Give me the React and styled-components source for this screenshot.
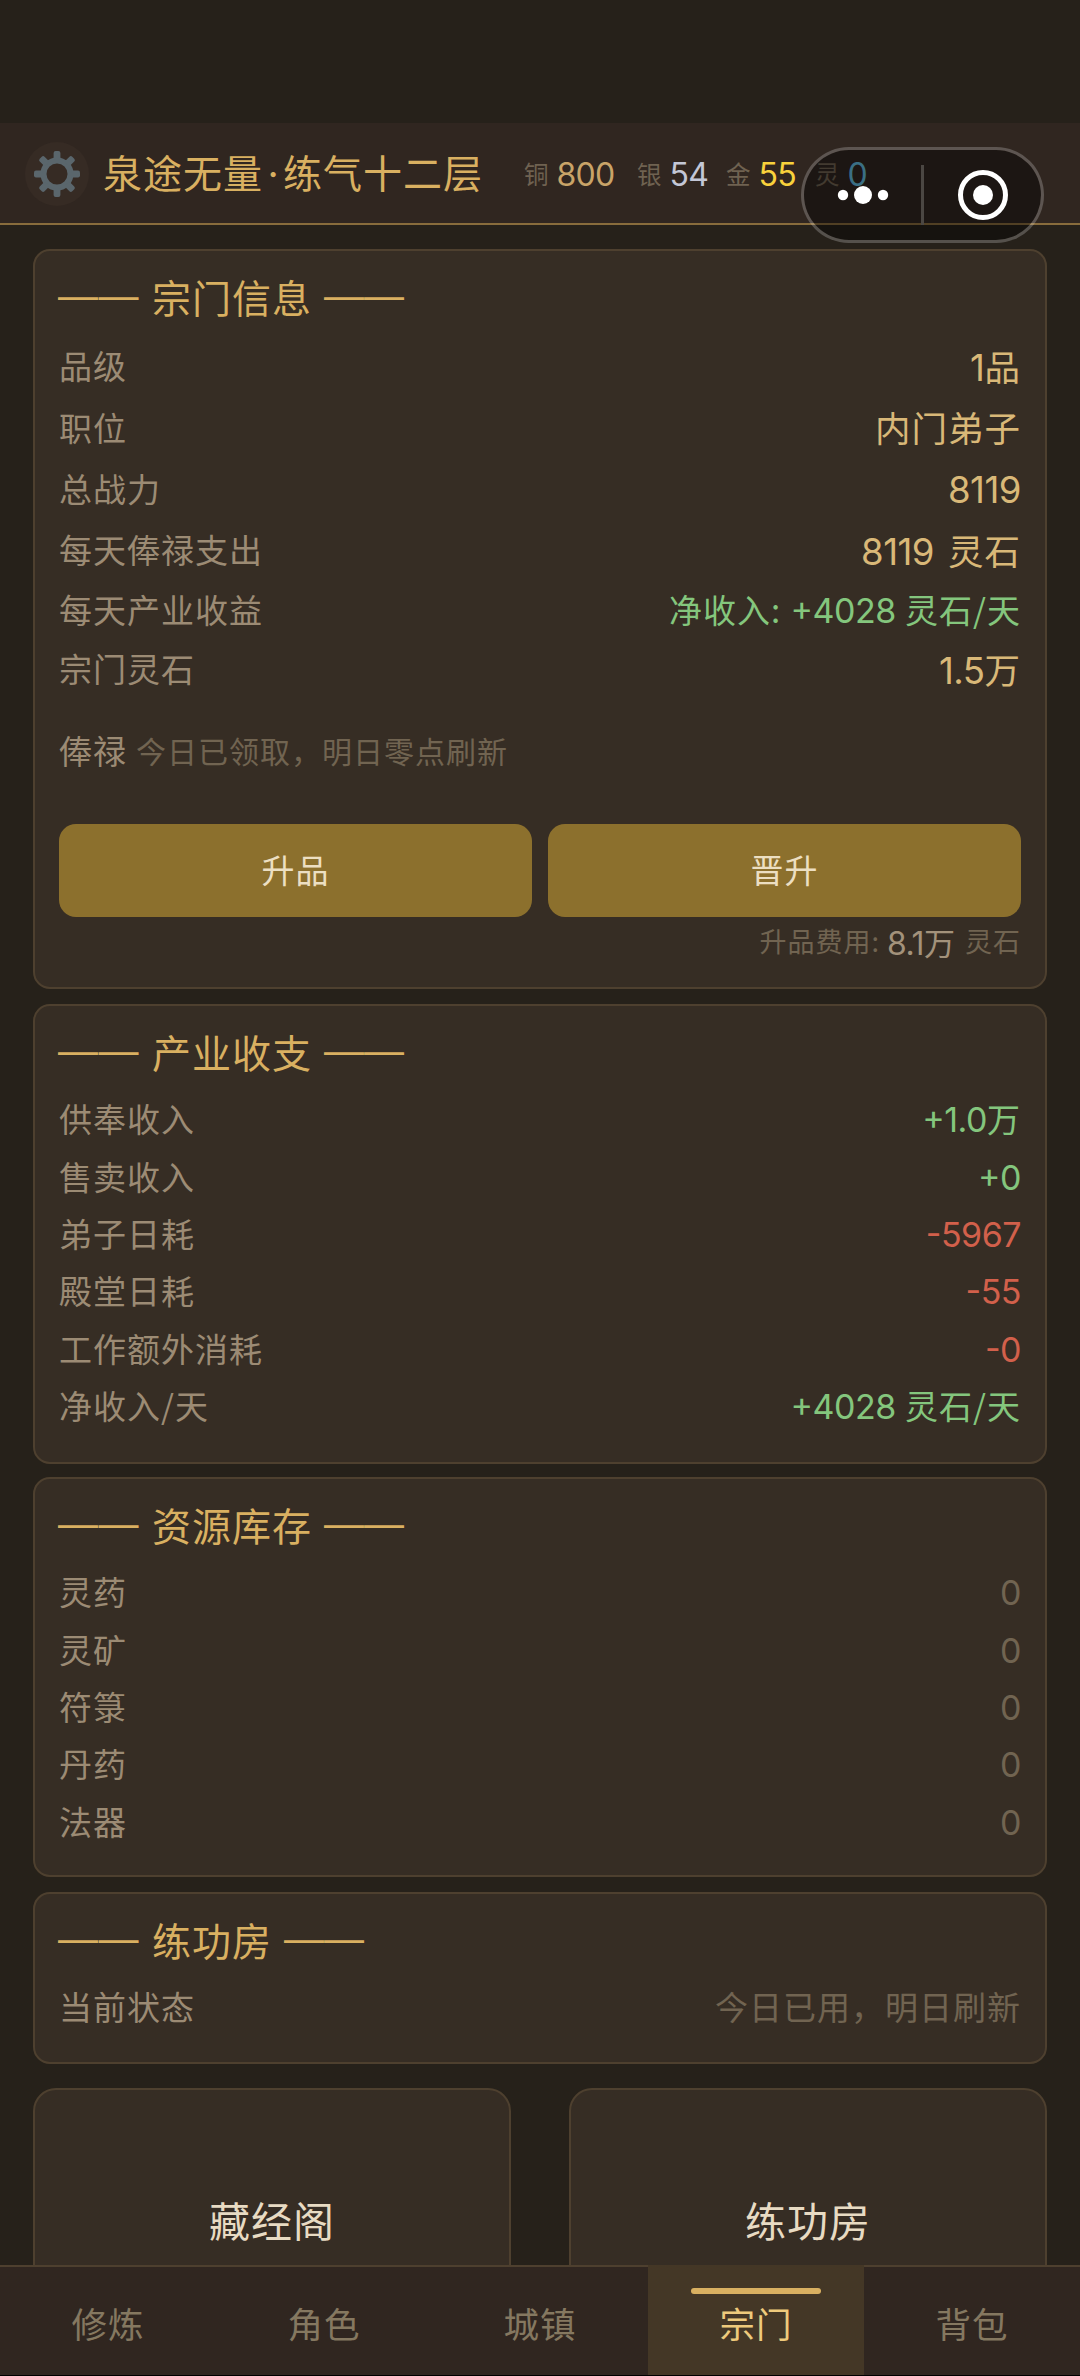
import React from 'react';
import styled, { createGlobalStyle } from 'styled-components';

const Global = createGlobalStyle`
  * { box-sizing: border-box; }
  body {
    margin: 0;
    background: #26211a;
    font-family: "Noto Sans CJK SC", sans-serif;
    letter-spacing: 1px;
  }
`;

const Screen = styled.div`
  height: 2376px;
  display: flex;
  flex-direction: column;
  overflow: hidden;
  background: #26211a;
  border-bottom: 1px solid #000;
`;

const StatusSpace = styled.div`
  flex: none;
  height: 123px;
`;

const Header = styled.header`
  position: relative;
  flex: none;
  height: 102px;
  display: flex;
  align-items: center;
  padding: 1px 0 0 25px;
  background: #302620;
  border-bottom: 2px solid #886c3c;
`;

const GearButton = styled.div`
  width: 64px;
  height: 64px;
  border-radius: 50%;
  display: grid;
  place-items: center;
  background: #362b24;
`;

const Player = styled.div`
  width: 421px;
  margin: -2px 0 0 14px;
  font-size: 39px;
  line-height: 60px;
  color: #d9b061;
  white-space: nowrap;
`;

const MidDot = styled.span`
  display: inline-block;
  width: 20px;
  text-align: center;
  letter-spacing: 0;
  font-family: Inter, sans-serif;
`;

const Purse = styled.div`
  display: flex;
  align-items: center;
`;

const Coin = styled.div`
  width: ${(p) => p.$w}px;
  display: flex;
  align-items: center;
  font-size: 24.5px;
  line-height: 36px;
  color: #6f6251;
`;

const CoinCount = styled.span`
  margin: 3px 0 0 7px;
  font-family: Inter, sans-serif;
  font-size: 32px;
  letter-spacing: -0.7px;
  color: ${(p) => p.$color};
`;

const Capsule = styled.div`
  position: absolute;
  left: 801px;
  top: 24px;
  z-index: 2;
  width: 243px;
  height: 96px;
  border: 3px solid rgba(255, 255, 255, 0.22);
  border-radius: 48px;
  background: rgba(0, 0, 0, 0.4);
  background-clip: padding-box;
  display: grid;
  grid-template-columns: 1fr 3px 1fr;
  align-items: center;
  justify-items: center;
`;

const CapsuleRule = styled.i`
  width: 3px;
  height: 60px;
  background: #4b4743;
`;

const Content = styled.main`
  flex: 1;
  min-height: 0;
  overflow: hidden;
  padding: 24px 33px 0;
`;

const Card = styled.section`
  height: ${(p) => p.$h}px;
  margin-bottom: ${(p) => p.$gap || 15}px;
  padding: 16px 24px 0;
  border: 2px solid #4e402f;
  border-radius: 17px;
  background: #362d24;
`;

const CardTitle = styled.h2`
  display: flex;
  margin: 0 0 8px -1px;
  font-size: 39px;
  font-weight: 400;
  line-height: 59px;
  color: #d9b061;
`;

const Dash = styled.span`
  font-family: "Liberation Sans", sans-serif;
  font-size: 40px;
  line-height: 57px;
  letter-spacing: ${(p) => (p.$split ? 0.5 : 0)}px;
`;

const TitleText = styled.span`
  margin: 0 12px 0 13px;
`;

const Row = styled.div`
  display: flex;
  align-items: center;
  justify-content: space-between;
  height: ${(p) => (p.$large ? 61.4 : 57.4)}px;
  padding-top: 1px;
  font-size: 33px;
  color: #9c8b74;
`;

const tones = {
  gold: '#d9b878',
  green: '#84c67d',
  red: '#d2604b',
  muted: '#716451',
};

const Value = styled.span`
  font-size: ${(p) => (p.$large ? 35.5 : 33)}px;
  word-spacing: ${(p) => (p.$large ? 5 : 1)}px;
  color: ${(p) => tones[p.$tone]};
`;

const Num = styled.span`
  font-family: Inter, sans-serif;
  font-size: 1.03em;
  font-feature-settings: "case" 1;
  letter-spacing: -0.5px;
`;

const Stipend = styled.div`
  display: flex;
  align-items: center;
  gap: 9px;
  height: 62px;
  margin-top: 21px;
  font-size: 33px;
  color: #9c8b74;
`;

const StipendNote = styled.span`
  font-size: 30px;
  color: #716451;
`;

const Actions = styled.div`
  display: grid;
  grid-template-columns: 1fr 1fr;
  gap: 16px;
  margin-top: 43px;
`;

const ActionButton = styled.button`
  height: 93px;
  padding: 0 0 3px;
  border: 0;
  border-radius: 17px;
  background: #8c702d;
  color: #ecdfc2;
  font: inherit;
  font-size: 33px;
  letter-spacing: 1px;
`;

const Fee = styled.div`
  display: flex;
  justify-content: flex-end;
  align-items: center;
  height: 46px;
  font-size: 27px;
  color: #716451;
`;

const FeeAmount = styled.span`
  margin: 2px 9px 0 7px;
  font-size: 31px;
  color: #a3927b;
`;

const Halls = styled.div`
  display: grid;
  grid-template-columns: 1fr 1fr;
  gap: 58px;
  margin-top: 24px;
`;

const Hall = styled.div`
  height: 268px;
  padding-bottom: 6px;
  border: 2px solid #4e402f;
  border-radius: 23px;
  background: #362d24;
  display: grid;
  place-items: center;
  font-size: 41px;
  color: #e8dbc3;
`;

const TabBar = styled.nav`
  flex: none;
  height: 110px;
  display: grid;
  grid-template-columns: repeat(5, 1fr);
  background: #302620;
  border-top: 2px solid #4e402f;
`;

const Tab = styled.div`
  position: relative;
  margin-top: -2px;
  padding-top: 4px;
  display: grid;
  place-items: center;
  font-size: 35.5px;
  color: ${(p) => (p.$active ? '#eeca7c' : '#857860')};
  background: ${(p) => (p.$active ? '#443726' : 'transparent')};
`;

const TabMark = styled.i`
  position: absolute;
  top: 23px;
  left: 20%;
  width: 60%;
  height: 6px;
  border-radius: 3px;
  background: #d9b061;
`;

const Gear = () => (
  <svg width="46" height="46" viewBox="-23 -23 46 46">
    <circle r="13.5" fill="none" stroke="#5a666c" strokeWidth="6" />
    {[0, 45, 90, 135, 180, 225, 270, 315].map((a) => (
      <rect key={a} x="-3.4" y="-23" width="6.8" height="9" rx="2" fill="#5a666c" transform={`rotate(${a})`} />
    ))}
  </svg>
);

const MoreDots = () => (
  <svg width="54" height="24" viewBox="-27 -12 54 24" fill="#fff">
    <circle cx="-20" r="5.2" />
    <circle r="9" />
    <circle cx="20" r="5.2" />
  </svg>
);

const Target = () => (
  <svg width="52" height="52" viewBox="-26 -26 52 52" fill="#fff">
    <circle r="22.5" fill="none" stroke="#fff" strokeWidth="5" />
    <circle r="10" />
  </svg>
);

const Rich = ({ text }) =>
  text.split(/([+\-\d.]+)/).map((s, i) => (i % 2 ? <Num key={i}>{s}</Num> : s));

const Title = ({ children }) => (
  <CardTitle>
    <Dash $split>——</Dash>
    <TitleText>{children}</TitleText>
    <Dash>——</Dash>
  </CardTitle>
);

const Entry = ({ label, value, tone = 'muted', large }) => (
  <Row $large={large}>
    <span>{label}</span>
    <Value $tone={tone} $large={large}>
      <Rich text={value} />
    </Value>
  </Row>
);

const coins = [
  ['铜', '800', '#c9a468', 113],
  ['银', '54', '#c3c7d6', 89],
  ['金', '55', '#f8d13c', 89],
  ['灵', '0', '#62b9dc', 60],
];

const budget = [
  ['供奉收入', '+1.0万', 'green'],
  ['售卖收入', '+0', 'green'],
  ['弟子日耗', '-5967', 'red'],
  ['殿堂日耗', '-55', 'red'],
  ['工作额外消耗', '-0', 'red'],
  ['净收入/天', '+4028 灵石/天', 'green'],
];

const tabs = ['修炼', '角色', '城镇', '宗门', '背包'];

export default function App() {
  return (
    <>
      <Global />
      <Screen>
        <StatusSpace />
        <Header>
          <GearButton><Gear /></GearButton>
          <Player>泉途无量<MidDot>·</MidDot>练气十二层</Player>
          <Purse>
            {coins.map(([name, count, color, w]) => (
              <Coin key={name} $w={w}>
                {name}
                <CoinCount $color={color}>{count}</CoinCount>
              </Coin>
            ))}
          </Purse>
          <Capsule>
            <MoreDots />
            <CapsuleRule />
            <Target />
          </Capsule>
        </Header>
        <Content>
          <Card $h={740}>
            <Title>宗门信息</Title>
            <Entry label="品级" value="1品" tone="gold" large />
            <Entry label="职位" value="内门弟子" tone="gold" large />
            <Entry label="总战力" value="8119" tone="gold" large />
            <Entry label="每天俸禄支出" value="8119 灵石" tone="gold" large />
            <Entry label="每天产业收益" value="净收入: +4028 灵石/天" tone="green" />
            <Entry label="宗门灵石" value="1.5万" tone="gold" large />
            <Stipend>
              俸禄<StipendNote>今日已领取，明日零点刷新</StipendNote>
            </Stipend>
            <Actions>
              <ActionButton>升品</ActionButton>
              <ActionButton>晋升</ActionButton>
            </Actions>
            <Fee>
              升品费用:<FeeAmount><Rich text="8.1万" /></FeeAmount>灵石
            </Fee>
          </Card>
          <Card $h={460} $gap={13}>
            <Title>产业收支</Title>
            {budget.map(([label, value, tone]) => (
              <Entry key={label} label={label} value={value} tone={tone} />
            ))}
          </Card>
          <Card $h={400}>
            <Title>资源库存</Title>
            {['灵药', '灵矿', '符箓', '丹药', '法器'].map((label) => (
              <Entry key={label} label={label} value="0" />
            ))}
          </Card>
          <Card $h={172}>
            <Title>练功房</Title>
            <Entry label="当前状态" value="今日已用，明日刷新" />
          </Card>
          <Halls>
            <Hall>藏经阁</Hall>
            <Hall>练功房</Hall>
          </Halls>
        </Content>
        <TabBar>
          {tabs.map((name) => (
            <Tab key={name} $active={name === '宗门'}>
              {name === '宗门' && <TabMark />}
              {name}
            </Tab>
          ))}
        </TabBar>
      </Screen>
    </>
  );
}
